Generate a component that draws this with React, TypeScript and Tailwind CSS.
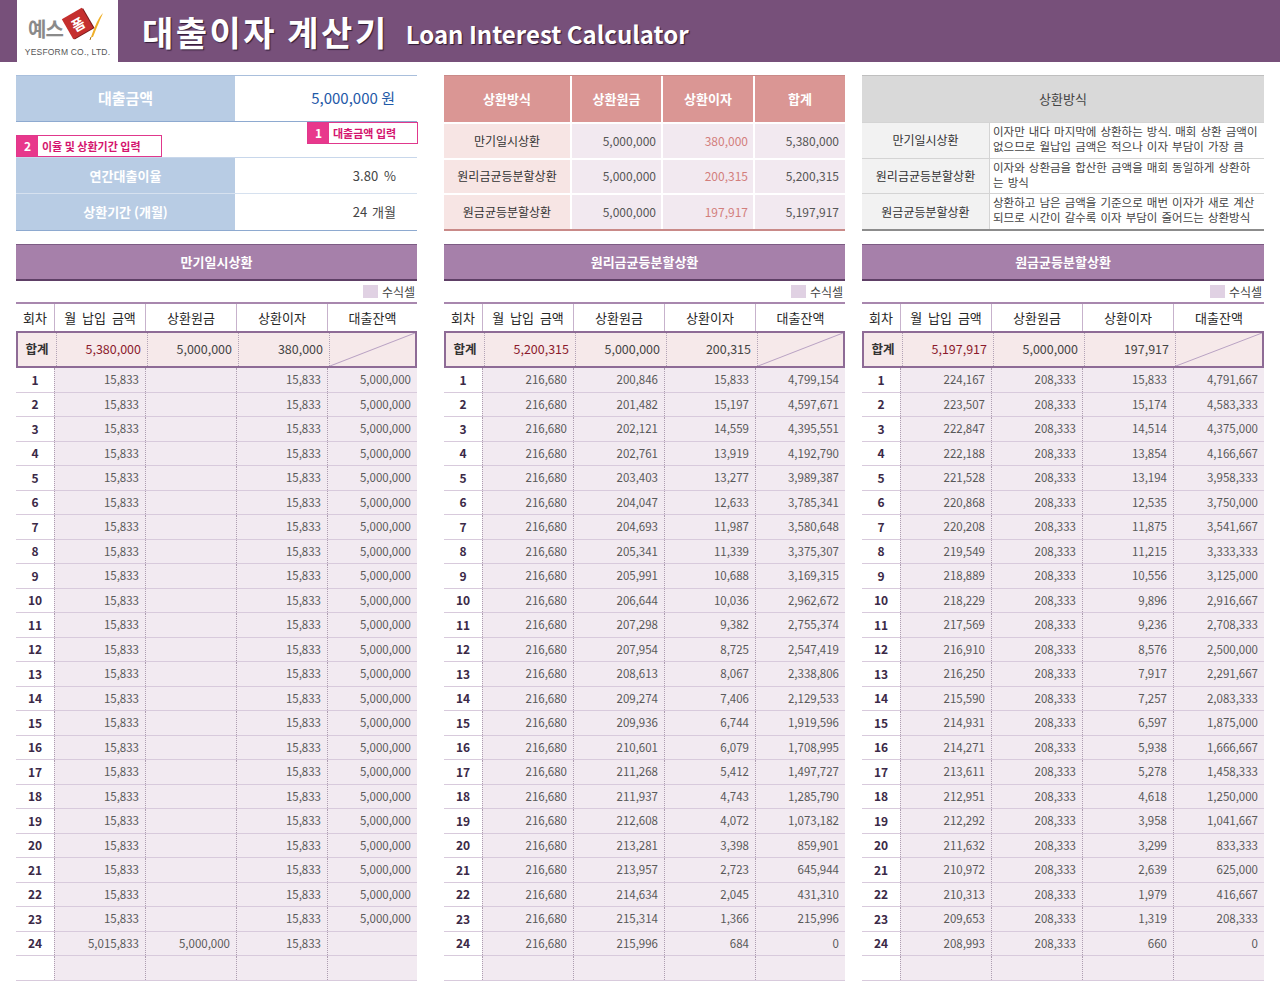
import React from 'react';

type Row = [string, string, string, string];

const split = (s: string) => s.trim().split(/\s+/);

// 만기일시상환
const lumpRows: Row[] = [
  ...Array.from({ length: 23 }, () => ['15,833', '', '15,833', '5,000,000'] as Row),
  ['5,015,833', '5,000,000', '15,833', ''],
];

// 원리금균등분할상환
const annPrincipal = split(`200,846 201,482 202,121 202,761 203,403 204,047 204,693 205,341 205,991 206,644 207,298 207,954
 208,613 209,274 209,936 210,601 211,268 211,937 212,608 213,281 213,957 214,634 215,314 215,996`);
const annInterest = split(`15,833 15,197 14,559 13,919 13,277 12,633 11,987 11,339 10,688 10,036 9,382 8,725
 8,067 7,406 6,744 6,079 5,412 4,743 4,072 3,398 2,723 2,045 1,366 684`);
const annBalance = split(`4,799,154 4,597,671 4,395,551 4,192,790 3,989,387 3,785,341 3,580,648 3,375,307 3,169,315 2,962,672 2,755,374 2,547,419
 2,338,806 2,129,533 1,919,596 1,708,995 1,497,727 1,285,790 1,073,182 859,901 645,944 431,310 215,996 0`);
const annRows: Row[] = annPrincipal.map((p, i) => ['216,680', p, annInterest[i], annBalance[i]]);

// 원금균등분할상환
const eqMonthly = split(`224,167 223,507 222,847 222,188 221,528 220,868 220,208 219,549 218,889 218,229 217,569 216,910
 216,250 215,590 214,931 214,271 213,611 212,951 212,292 211,632 210,972 210,313 209,653 208,993`);
const eqInterest = split(`15,833 15,174 14,514 13,854 13,194 12,535 11,875 11,215 10,556 9,896 9,236 8,576
 7,917 7,257 6,597 5,938 5,278 4,618 3,958 3,299 2,639 1,979 1,319 660`);
const eqBalance = split(`4,791,667 4,583,333 4,375,000 4,166,667 3,958,333 3,750,000 3,541,667 3,333,333 3,125,000 2,916,667 2,708,333 2,500,000
 2,291,667 2,083,333 1,875,000 1,666,667 1,458,333 1,250,000 1,041,667 833,333 625,000 416,667 208,333 0`);
const eqRows: Row[] = eqMonthly.map((m, i) => [m, '208,333', eqInterest[i], eqBalance[i]]);

const Logo = () => (
  <div className="w-[101px] bg-white flex flex-col items-center">
    <div className="relative h-[48px] w-[101px]">
      <span className="absolute left-[11px] top-[19px] text-[20px] font-bold text-[#8a8a8a] tracking-[-1px] leading-none">
        예스
      </span>
      <div className="absolute left-[49px] top-[12px] w-[23px] h-[23px] bg-[#c52f2e] rotate-[-30deg] shadow-[1px_1px_0_#7a1a1a] flex items-center justify-center text-white text-[14px] font-bold leading-none">
        폼
      </div>
      <svg className="absolute left-[71px] top-[12px]" width="16" height="30" viewBox="0 0 16 30">
        <path d="M15 1 C10 6 7 14 3 25 L5 25 C9 15 12 8 15 1 Z" fill="#f0b02a" />
        <path d="M3 25 L2 28" stroke="#a87410" strokeWidth="1" />
      </svg>
    </div>
    <div className="text-[8.5px] text-[#555] font-['Liberation_Sans',sans-serif] leading-none tracking-[0.2px]">
      YESFORM CO., LTD.
    </div>
  </div>
);

const Header = () => (
  <header className="h-[62px] bg-[#77507a] flex pl-[17px]">
    <Logo />
    <div className="flex items-center pl-[24px]">
      <h1 className="text-[34px] font-bold text-white tracking-[2.5px] [text-shadow:1px_1px_1px_#2e1a33]">대출이자 계산기</h1>
      <span className="ml-[17px] mt-[6px] text-[24px] font-bold text-white [text-shadow:1px_1px_1px_#2e1a33]">
        Loan Interest Calculator
      </span>
    </div>
  </header>
);

const Callout = ({ n, text, className }: { n: string; text: string; className: string }) => (
  <div className={`absolute flex border border-[#e0388c] bg-white ${className}`}>
    <div className="w-[21px] bg-[#e8388c] text-white text-[12px] font-bold flex items-center justify-center">{n}</div>
    <div className="flex items-center px-[4px] text-[11px] font-bold text-[#d4146e]">{text}</div>
  </div>
);

const InputPanel = () => (
  <div className="h-[156px] flex flex-col">
    <div className="grid grid-cols-[219px_1fr] h-[47px] border-t border-[#a9bfdc] border-b border-b-[#8eaad0]">
      <div className="bg-[#b8cce4] flex items-center justify-center text-white text-[15px] font-bold">대출금액</div>
      <div className="flex items-center justify-end pr-[22px] text-[15px] text-[#1f5aa8]">5,000,000 원</div>
    </div>
    <div className="relative h-[35px]">
      <Callout n="1" text="대출금액 입력" className="right-[-1px] top-0 h-[22px] w-[111px]" />
      <Callout n="2" text="이율 및 상환기간 입력" className="left-0 top-[13px] h-[22px] w-[146px]" />
    </div>
    <div className="grid grid-cols-[219px_1fr] h-[36px] border-t border-[#c8d7eb]">
      <div className="bg-[#b8cce4] flex items-center justify-center text-white text-[13px] font-bold">연간대출이율</div>
      <div className="flex items-center justify-end pr-[21px] text-[13px] text-[#444] [word-spacing:3px]">3.80 %</div>
    </div>
    <div className="grid grid-cols-[219px_1fr] flex-1 border-t border-[#d6e1ef] border-b border-b-[#8eaad0]">
      <div className="bg-[#b8cce4] flex items-center justify-center text-white text-[13px] font-bold">상환기간 (개월)</div>
      <div className="flex items-center justify-end pr-[21px] text-[13px] text-[#444] [word-spacing:2px]">24 개월</div>
    </div>
  </div>
);

const summary = [
  ['만기일시상환', '5,000,000', '380,000', '5,380,000'],
  ['원리금균등분할상환', '5,000,000', '200,315', '5,200,315'],
  ['원금균등분할상환', '5,000,000', '197,917', '5,197,917'],
];

const SummaryPanel = () => (
  <div className="h-[156px] border-t border-[#c98a88] border-b-2 border-b-[#c98a88] bg-white grid grid-cols-[126px_89px_90px_1fr] grid-rows-[46px_1fr_1fr_1fr] gap-[2px]">
    {['상환방식', '상환원금', '상환이자', '합계'].map((h) => (
      <div key={h} className="bg-[#da9694] flex items-center justify-center text-white text-[13px] font-bold">
        {h}
      </div>
    ))}
    {summary.map((r) => (
      <React.Fragment key={r[0]}>
        <div className="bg-[#f7e5e4] flex items-center justify-center text-[12px] text-[#333]">{r[0]}</div>
        <div className="bg-[#f2e9f0] flex items-center justify-end pr-[5px] text-[12px] text-[#555]">{r[1]}</div>
        <div className="bg-[#f2e9f0] flex items-center justify-end pr-[5px] text-[12px] text-[#d27e7c]">{r[2]}</div>
        <div className="bg-[#f2e9f0] flex items-center justify-end pr-[6px] text-[12px] text-[#555]">{r[3]}</div>
      </React.Fragment>
    ))}
  </div>
);

const descs: [string, string, string][] = [
  ['만기일시상환', '이자만 내다 마지막에 상환하는 방식. 매회 상환 금액이', '없으므로 월납입 금액은 적으나 이자 부담이 가장 큼'],
  ['원리금균등분할상환', '이자와 상환금을 합산한 금액을 매회 동일하게 상환하', '는 방식'],
  ['원금균등분할상환', '상환하고 남은 금액을 기준으로 매번 이자가 새로 계산', '되므로 시간이 갈수록 이자 부담이 줄어드는 상환방식'],
];

const DescPanel = () => (
  <div className="h-[156px] flex flex-col border-t border-[#bfbfbf] border-b-2 border-b-[#8c8c8c]">
    <div className="h-[46px] bg-[#d9d9d9] flex items-center justify-center text-[13px] text-[#444]">상환방식</div>
    {descs.map((d) => (
      <div key={d[0]} className="flex-1 grid grid-cols-[128px_1fr] border-t border-[#d4d4d4]">
        <div className="bg-[#f2f2f2] border-r border-[#d4d4d4] flex items-center justify-center text-[12px] text-[#333]">
          {d[0]}
        </div>
        <div className="px-[3px] pt-[1px] text-[11.5px] leading-[15px] text-[#444] whitespace-nowrap [word-spacing:1.5px]">
          {d[1]}
          <br />
          {d[2]}
        </div>
      </div>
    ))}
  </div>
);

const cols = 'grid grid-cols-[38px_91px_91px_91px_1fr]';

const Schedule = ({ title, sum, rows }: { title: string; sum: [string, string, string]; rows: Row[] }) => (
  <div className="flex flex-col">
    <div className="h-[37px] bg-[#a680aa] border-t border-[#7d5c84] border-b-2 border-b-[#5e3f66] flex items-center justify-center text-white text-[13px] font-bold">
      {title}
    </div>
    <div className="h-[21px] flex items-center justify-end gap-[4px] pr-[2px] text-[12px] text-[#444]">
      <span className="w-[15px] h-[13px] bg-[#e0d1e3]" />
      수식셀
    </div>
    <div className="border-t-2 border-[#a887ae]">
      <div className={`${cols} h-[27px] bg-white text-[13px] text-[#262626]`}>
        {['회차', '월 납입 금액', '상환원금', '상환이자', '대출잔액'].map((h, i) => (
          <div
            key={h}
            className={`flex items-center justify-center [word-spacing:3px] ${i > 0 ? 'border-l border-[#c7b2cc]' : ''}`}
          >
            {h}
          </div>
        ))}
      </div>
      <div className={`${cols} h-[37px] border-2 border-[#8e6b96] bg-[#f6e9ea] text-[12.5px]`}>
        <div className="flex items-center justify-center font-bold text-[#333]">합계</div>
        <div className="flex items-center justify-end pr-[6px] border-l border-dotted border-[#b3a3b6] text-[#8b1a2c]">{sum[0]}</div>
        <div className="flex items-center justify-end pr-[6px] border-l border-dotted border-[#b3a3b6] text-[#444]">{sum[1]}</div>
        <div className="flex items-center justify-end pr-[6px] border-l border-dotted border-[#b3a3b6] text-[#444]">{sum[2]}</div>
        <div className="relative border-l border-dotted border-[#b3a3b6]">
          <svg className="absolute inset-0 w-full h-full" preserveAspectRatio="none" viewBox="0 0 100 100">
            <line x1="0" y1="100" x2="100" y2="0" stroke="#b9a2c3" strokeWidth="1" vectorEffect="non-scaling-stroke" />
          </svg>
        </div>
      </div>
      {[...rows, ['', '', '', ''] as Row].map((r, i) => (
        <div key={i} className={`${cols} h-[24.5px] border-b border-[#d8cadc] text-[11.5px]`}>
          <div className="bg-white flex items-center justify-center font-bold text-[12px] text-[#3b2947]">{i < 24 ? i + 1 : ''}</div>
          {r.map((v, j) => (
            <div
              key={j}
              className="bg-[#f2eaf1] border-l border-dotted border-[#ad9db0] flex items-center justify-end pr-[6px] text-[#595959]"
            >
              {v}
            </div>
          ))}
        </div>
      ))}
    </div>
  </div>
);

export default function App() {
  return (
    <div className="w-[1280px] h-[981px] overflow-hidden bg-white font-['Noto_Sans_CJK_KR',sans-serif]">
      <Header />
      <main className="flex pl-[16px] pt-[13px]">
        <div className="w-[401px] flex flex-col gap-[13px]">
          <InputPanel />
          <Schedule title="만기일시상환" sum={['5,380,000', '5,000,000', '380,000']} rows={lumpRows} />
        </div>
        <div className="w-[401px] ml-[27px] flex flex-col gap-[13px]">
          <SummaryPanel />
          <Schedule title="원리금균등분할상환" sum={['5,200,315', '5,000,000', '200,315']} rows={annRows} />
        </div>
        <div className="w-[402px] ml-[17px] flex flex-col gap-[13px]">
          <DescPanel />
          <Schedule title="원금균등분할상환" sum={['5,197,917', '5,000,000', '197,917']} rows={eqRows} />
        </div>
      </main>
    </div>
  );
}
